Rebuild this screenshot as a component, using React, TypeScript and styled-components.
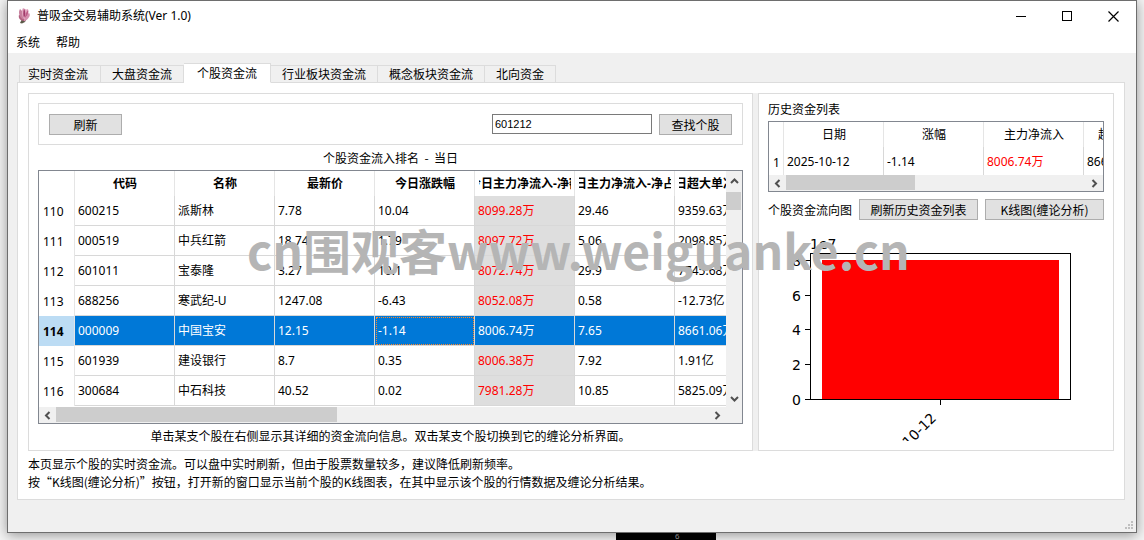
import React from "react";
import styled, { createGlobalStyle, css } from "styled-components";

const UI = '"Noto Sans", "Noto Sans CJK SC", sans-serif';
const SONG = '"Noto Sans CJK SC", sans-serif';
const LINE = "#dcdcdc";
const GRID = "#d8d8d8";

const GlobalStyle = createGlobalStyle`
  *, *::before, *::after { box-sizing: border-box; }
  html, body { margin: 0; padding: 0; }
  body { background: #f4f4f4; color: #000; font: 12px/18px ${SONG}; overflow: hidden; }
  button, input { font: inherit; color: inherit; margin: 0; }
`;

const Desktop = styled.div`
  position: relative;
  padding: 0 7px 7px;
`;

const Frame = styled.main`
  background: #f0f0f0;
  border: 1px solid #6e6e6e;
  box-shadow: 0 2px 12px rgba(0, 0, 0, 0.4);
`;

const Behind = styled.div`
  position: absolute;
  left: 616px;
  bottom: 0;
  width: 100px;
  height: 7px;
  padding-left: 59px;
  overflow: hidden;
  background: #000;
  color: #8a8a8a;
  font: 8px/7px "Liberation Sans", sans-serif;
`;

const TitleBar = styled.header`
  display: flex;
  align-items: center;
  height: 30px;
  padding-left: 8px;
  background: #fff;
  font-family: ${UI};
`;

const Title = styled.h1`
  flex: 1;
  margin: 0 0 0 5px;
  font-size: 12px;
  font-weight: 400;
  line-height: 18px;
`;

const Caption = styled.button`
  display: flex;
  align-items: center;
  justify-content: center;
  width: 46px;
  height: 29px;
  padding: 0;
  border: 0;
  background: transparent;
`;

const MenuBar = styled.nav`
  display: flex;
  gap: 16px;
  height: 22px;
  padding: 0 8px;
  background: #fff;
  font-family: ${UI};
`;

const MenuItem = styled.button`
  padding: 2px 0 0;
  border: 0;
  background: transparent;
  line-height: 20px;
`;

const Body = styled.div`
  padding: 10px 11px 8px 9px;
`;

const TabList = styled.div`
  display: flex;
  align-items: flex-end;
  height: 20px;
  padding-left: 2px;
  margin-bottom: -1px;
  position: relative;
`;

const Tab = styled.button<{ $active?: boolean }>`
  height: 18px;
  padding: 0 11px;
  border: 1px solid ${LINE};
  border-left-width: 0;
  background: #f0f0f0;
  line-height: 16px;
  white-space: nowrap;
  &:first-child { border-left-width: 1px; padding: 0 12px 0 8px; }
  ${(p) =>
    p.$active &&
    css`
      height: 20px;
      padding: 0 13px;
      background: #fff;
      border-bottom-color: #fff;
      line-height: 18px;
    `}
`;

const Pane = styled.section`
  padding: 10px 10px 8px;
  background: #fff;
  border: 1px solid ${LINE};
`;

const Split = styled.div`
  display: grid;
  grid-template-columns: minmax(0, 725fr) 5px minmax(0, 356fr);
`;

const Group = styled.div`
  border: 1px solid ${LINE};
  padding: 9px;
`;

const Handle = styled.div`
  background: #f0f0f0;
`;

const SearchBar = styled.form`
  display: flex;
  gap: 7px;
  height: 42px;
  padding: 10px;
  border: 1px solid ${LINE};
`;

const PushButton = styled.button<{ $fill?: boolean }>`
  width: 73px;
  height: 21px;
  padding: 0;
  background: #e1e1e1;
  border: 1px solid #adadad;
  line-height: 19px;
  white-space: nowrap;
  ${(p) => p.$fill && css`flex: 1;`}
`;

const CodeInput = styled.input`
  width: 160px;
  height: 20px;
  margin-left: auto;
  padding: 0 2px;
  border: 1px solid #7a7a7a;
  background: #fff;
  font: 11px "Liberation Sans", sans-serif;
`;

const TableTitle = styled.div`
  height: 25px;
  text-align: center;
  line-height: 26px;
`;

const HintLine = styled.div`
  height: 16px;
  text-align: center;
  line-height: 23px;
`;

const TableFrame = styled.div`
  display: grid;
  grid-template-columns: minmax(0, 1fr) auto;
  border: 1px solid #828790;
  background: #fff;
  font-family: ${UI};
`;

const Viewport = styled.div<{ $max?: number }>`
  overflow: hidden;
  padding-bottom: 1px;
  ${(p) => p.$max && css`max-height: ${p.$max}px;`}
`;

const Grid = styled.table<{ $width: number }>`
  width: ${(p) => p.$width}px;
  table-layout: fixed;
  border-collapse: separate;
  border-spacing: 0;
  line-height: 18px;
`;

const Col = styled.col<{ $w: number }>`
  width: ${(p) => p.$w}px;
`;

const Head = styled.th<{ $bold?: boolean }>`
  height: 25px;
  padding: 0 3px 0 4px;
  border-right: 1px solid #e5e5e5;
  font-weight: ${(p) => (p.$bold ? 700 : 400)};
`;

const HeadLabel = styled.div`
  display: flex;
  justify-content: center;
  overflow: hidden;
  white-space: nowrap;
`;

const RowHead = styled.th<{ $on?: boolean }>`
  padding: 1px 0 0 4px;
  border-right: 1px solid #e5e5e5;
  text-align: left;
  font-weight: ${(p) => (p.$on ? 700 : 400)};
  background: ${(p) => (p.$on ? "#bcdcf4" : "#fff")};
`;

const Cell = styled.td<{ $red?: boolean; $shade?: boolean; $on?: boolean; $focus?: boolean }>`
  height: 30px;
  padding: 1px 0 0 3px;
  border-right: 1px solid ${GRID};
  border-bottom: 1px solid ${GRID};
  overflow: hidden;
  white-space: nowrap;
  color: ${(p) => (p.$on ? "#fff" : p.$red ? "#f00" : "#000")};
  background: ${(p) => (p.$on ? "#0078d7" : p.$shade ? "#dedede" : "#fff")};
  ${(p) => p.$focus && css`outline: 1px dotted #ff8728; outline-offset: -2px;`}
`;

const Bar = styled.div<{ $vertical?: boolean }>`
  display: flex;
  flex-direction: ${(p) => (p.$vertical ? "column" : "row")};
  ${(p) => (p.$vertical ? "width: 16px;" : "height: 16px;")}
  background: #f0f0f0;
`;

const Arrow = styled.button<{ $size: number }>`
  flex: none;
  display: flex;
  align-items: center;
  justify-content: center;
  min-width: 15px;
  min-height: 15px;
  flex-basis: ${(p) => p.$size}px;
  padding: 0;
  border: 0;
  background: transparent;
`;

const Track = styled.div<{ $vertical?: boolean }>`
  flex: 1;
  display: flex;
  flex-direction: ${(p) => (p.$vertical ? "column" : "row")};
`;

const Thumb = styled.div<{ $part: string; $vertical?: boolean }>`
  ${(p) => (p.$vertical ? `height: ${p.$part}; width: 15px;` : `width: ${p.$part}; height: 15px;`)}
  background: #cdcdcd;
`;

const Corner = styled.div`
  background: #f0f0f0;
`;

const ListTitle = styled.h2`
  margin: 0;
  height: 18px;
  line-height: 12px;
  font-size: 12px;
  font-weight: 400;
`;

const ChartHead = styled.div`
  display: flex;
  align-items: center;
  gap: 7px;
  padding: 7px 0 8px;
`;

const ChartTitle = styled.h2`
  margin: 0;
  font-size: 12px;
  font-weight: 400;
  line-height: 18px;
  white-space: nowrap;
`;

const Chart = styled.svg`
  display: block;
  width: 100%;
  height: 213px;
  font: 14px "DejaVu Sans", sans-serif;
`;

const Notes = styled.p`
  margin: 0;
  padding-top: 4px;
  line-height: 18px;
`;

const StatusBar = styled.footer`
  display: flex;
  justify-content: flex-end;
  align-items: flex-end;
  height: 24px;
  padding: 2px;
`;

const Watermark = styled.div`
  position: absolute;
  left: 247px;
  top: 219px;
  color: #b5b5b5;
  font: 700 48px/60px ${SONG};
  white-space: nowrap;
  pointer-events: none;
`;

const columns = [
  "代码", "名称", "最新价", "今日涨跌幅", "今日主力净流入-净额", "今日主力净流入-净占比", "今日超大单净流入-净额",
];

const rows: [number, string[]][] = [
  [110, ["600215", "派斯林", "7.78", "10.04", "8099.28万", "29.46", "9359.63万"]],
  [111, ["000519", "中兵红箭", "18.74", "1.79", "8097.72万", "5.06", "2098.85万"]],
  [112, ["601011", "宝泰隆", "3.27", "10.1", "8072.74万", "29.9", "7745.68万"]],
  [113, ["688256", "寒武纪-U", "1247.08", "-6.43", "8052.08万", "0.58", "-12.73亿"]],
  [114, ["000009", "中国宝安", "12.15", "-1.14", "8006.74万", "7.65", "8661.06万"]],
  [115, ["601939", "建设银行", "8.7", "0.35", "8006.38万", "7.92", "1.91亿"]],
  [116, ["300684", "中石科技", "40.52", "0.02", "7981.28万", "10.85", "5825.09万"]],
];
const selected = 114;

const historyColumns = ["日期", "涨幅", "主力净流入", "超大单净流入"];
const history = ["2025-10-12", "-1.14", "8006.74万", "8661.06万"];

const tabs = ["实时资金流", "大盘资金流", "个股资金流", "行业板块资金流", "概念板块资金流", "北向资金"];

const chevrons = {
  left: "M6.5 1 3 4.5 6.5 8",
  right: "M2.5 1 6 4.5 2.5 8",
  up: "M1 6 4.5 2.5 8 6",
  down: "M1 3 4.5 6.5 8 3",
};

function ScrollArrow({ dir, label, size = 17 }: { dir: keyof typeof chevrons; label: string; size?: number }) {
  return (
    <Arrow type="button" aria-label={label} $size={size}>
      <svg width="9" height="9" viewBox="0 0 9 9">
        <path d={chevrons[dir]} fill="none" stroke="#505050" strokeWidth="2" />
      </svg>
    </Arrow>
  );
}

function HScroll({ part }: { part: string }) {
  return (
    <Bar>
      <ScrollArrow dir="left" label="向左滚动" />
      <Track><Thumb $part={part} /></Track>
      <ScrollArrow dir="right" label="向右滚动" />
    </Bar>
  );
}

function Logo() {
  return (
    <svg width="16" height="18" viewBox="0 0 16 18">
      <path d="M6 12 10 13 9 15 6 16.5 4 16Z" fill="#5b5a48" />
      <path d="M3 8C2 11 4 13.5 8 14L9 9Z" fill="#b0607f" />
      <path d="M13 6C15 8 13 12 8 14.5L8 9Z" fill="#d58fae" />
      <path d="M4 2C2 5 3 10 7 12.5 9 9 8 5 4 2Z" fill="#c77f9d" />
      <path d="M7 1C5 4 6 9 8 12.5 12 9 13 5 12 2 10 3 9 2 7 1Z" fill="#e3a9c2" />
      <path d="M8 1.5C7 5 7 8 8 11 9.500 8 10 5 8 1.500Z" fill="#a23c6b" />
      <path d="M12 3C10 5 9 8 9 11 11 9 13 6 12 3Z" fill="#bd5d88" />
    </svg>
  );
}

const ticks = [
  { label: "8", y: 32 },
  { label: "6", y: 67 },
  { label: "4", y: 101 },
  { label: "2", y: 136 },
  { label: "0", y: 171 },
];

function FlowChart() {
  return (
    <Chart viewBox="0 0 336 213" preserveAspectRatio="xMinYMin meet" role="img" aria-label="个股资金流向图">
      <rect x="54" y="32" width="237" height="139" fill="#f00" />
      <rect x="42.5" y="25.5" width="260" height="146" fill="none" stroke="#000" />
      <text x="42" y="21">1e7</text>
      {ticks.map((t) => (
        <g key={t.label}>
          <path d={`M37 ${t.y + 0.5}H42`} stroke="#000" />
          <text x="33" y={t.y + 6} textAnchor="end">{t.label}</text>
        </g>
      ))}
      <path d="M172.5 172V177" stroke="#000" />
      <text transform="translate(169 191) rotate(-45)" textAnchor="end">10-12</text>
    </Chart>
  );
}

export default function App() {
  return (
    <>
      <GlobalStyle />
      <Desktop>
        <Frame>
          <TitleBar>
            <Logo />
            <Title>普吸金交易辅助系统(Ver 1.0)</Title>
            <Caption type="button" aria-label="最小化">
              <svg width="10" height="10"><path d="M0 5.5H10" stroke="#000" /></svg>
            </Caption>
            <Caption type="button" aria-label="最大化">
              <svg width="10" height="10"><rect x=".5" y=".5" width="9" height="9" fill="none" stroke="#000" /></svg>
            </Caption>
            <Caption type="button" aria-label="关闭">
              <svg width="11" height="11"><path d="M.5.5 10.5 10.5M10.5.5.5 10.5" stroke="#000" strokeWidth="1.2" /></svg>
            </Caption>
          </TitleBar>
          <MenuBar>
            <MenuItem type="button">系统</MenuItem>
            <MenuItem type="button">帮助</MenuItem>
          </MenuBar>

          <Body>
            <TabList role="tablist">
              {tabs.map((t, i) => (
                <Tab key={t} type="button" role="tab" aria-selected={i === 2} $active={i === 2}>{t}</Tab>
              ))}
            </TabList>
            <Pane>
              <Split>
                <Group>
                  <SearchBar onSubmit={(e) => e.preventDefault()}>
                    <PushButton type="button">刷新</PushButton>
                    <CodeInput aria-label="股票代码" defaultValue="601212" />
                    <PushButton type="submit">查找个股</PushButton>
                  </SearchBar>
                  <TableTitle>个股资金流入排名&nbsp; -&nbsp; 当日</TableTitle>
                  <TableFrame>
                    <Viewport>
                      <Grid $width={736}>
                        <colgroup>
                          <Col $w={36} />
                          {columns.map((c) => <Col key={c} $w={100} />)}
                        </colgroup>
                        <thead>
                          <tr>
                            <Head />
                            {columns.map((c) => (
                              <Head key={c} scope="col" $bold><HeadLabel>{c}</HeadLabel></Head>
                            ))}
                          </tr>
                        </thead>
                        <tbody>
                          {rows.map(([n, cells]) => (
                            <tr key={n}>
                              <RowHead scope="row" $on={n === selected}>{n}</RowHead>
                              {cells.map((c, i) => (
                                <Cell
                                  key={i}
                                  $on={n === selected}
                                  $red={i === 4}
                                  $shade={i === 4}
                                  $focus={n === selected && i === 3}
                                >
                                  {c}
                                </Cell>
                              ))}
                            </tr>
                          ))}
                        </tbody>
                      </Grid>
                    </Viewport>
                    <Bar $vertical>
                      <ScrollArrow dir="up" label="向上滚动" size={21} />
                      <Track $vertical><Thumb $vertical $part="9%" /></Track>
                      <ScrollArrow dir="down" label="向下滚动" />
                    </Bar>
                    <HScroll part="43%" />
                    <Corner />
                  </TableFrame>
                  <HintLine>单击某支个股在右侧显示其详细的资金流向信息。双击某支个股切换到它的缠论分析界面。</HintLine>
                </Group>
                <Handle />
                <Group>
                  <ListTitle>历史资金列表</ListTitle>
                  <TableFrame>
                    <Viewport $max={53}>
                      <Grid $width={415}>
                        <colgroup>
                          <Col $w={15} />
                          {historyColumns.map((c) => <Col key={c} $w={100} />)}
                        </colgroup>
                        <thead>
                          <tr>
                            <Head />
                            {historyColumns.map((c) => (
                              <Head key={c} scope="col"><HeadLabel>{c}</HeadLabel></Head>
                            ))}
                          </tr>
                        </thead>
                        <tbody>
                          <tr>
                            <RowHead scope="row">1</RowHead>
                            {history.map((c, i) => (
                              <Cell key={i} $red={i === 2}>{c}</Cell>
                            ))}
                          </tr>
                        </tbody>
                      </Grid>
                    </Viewport>
                    <Corner />
                    <HScroll part="43%" />
                  </TableFrame>
                  <ChartHead>
                    <ChartTitle>个股资金流向图</ChartTitle>
                    <PushButton type="button" $fill>刷新历史资金列表</PushButton>
                    <PushButton type="button" $fill>K线图(缠论分析)</PushButton>
                  </ChartHead>
                  <FlowChart />
                </Group>
              </Split>
              <Notes>
                本页显示个股的实时资金流。可以盘中实时刷新，但由于股票数量较多，建议降低刷新频率。
                <br />
                按“K线图(缠论分析)”按钮，打开新的窗口显示当前个股的K线图表，在其中显示该个股的行情数据及缠论分析结果。
              </Notes>
            </Pane>
          </Body>
          <StatusBar>
            <svg width="9" height="9" fill="#bfbfbf" aria-hidden="true">
              <path d="M6 0h2v2h-2zM3 3h2v2h-2zM6 3h2v2h-2zM0 6h2v2h-2zM3 6h2v2h-2zM6 6h2v2h-2z" />
            </svg>
          </StatusBar>
        </Frame>
        <Behind>6</Behind>
        <Watermark>cn围观客www.weiguanke.cn</Watermark>
      </Desktop>
    </>
  );
}
